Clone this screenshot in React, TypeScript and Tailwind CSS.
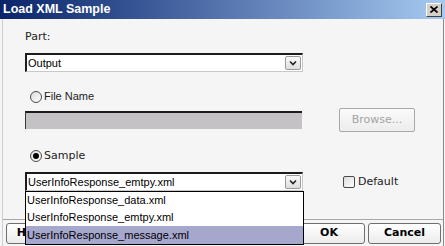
import React from 'react';

const Chevron = () => (
    <svg width="10" height="6" viewBox="0 0 10 6" className="text-[#222]">
        <path d="M2 1.5 L5 4.5 L8 1.5" fill="none" stroke="currentColor" strokeWidth="1.6" />
    </svg>
);

const DropButton = () => (
    <div className="absolute right-[1px] top-[1px] bottom-[1px] w-[16px] rounded-[2px] border border-[#9a9a9a] bg-gradient-to-b from-[#fafafa] to-[#dedede] flex items-center justify-center">
        <Chevron />
    </div>
);

const Radio = ({ checked }: { checked?: boolean }) => (
    <span className="w-[12px] h-[12px] rounded-full border border-[#4a4a4a] bg-gradient-to-br from-[#dcdcdc] to-white flex items-center justify-center">
        {checked && <span className="w-[6px] h-[6px] rounded-full bg-black" />}
    </span>
);

const Field = ({ children, className = '' }: any) => (
    <div className={`relative h-[19px] flex items-center bg-white border-t-2 border-l-2 border-t-[#1c1c1c] border-l-[#1c1c1c] border-b border-r border-b-[#c8c8c8] border-r-[#c8c8c8] ${className}`}>
        {children}
    </div>
);

const DialogButton = ({ label, className = '' }: any) => (
    <div className={`h-[21px] rounded-[3px] border border-[#6e6e6e] bg-gradient-to-b from-white to-[#ececec] flex items-center justify-center font-['DejaVu_Sans'] font-bold text-[11px] text-black ${className}`}>
        {label}
    </div>
);

export default function App() {
    const items = ['UserInfoResponse_data.xml', 'UserInfoResponse_emtpy.xml', 'UserInfoResponse_message.xml'];
    return (
        <div className="w-[445px] h-[246px] overflow-hidden bg-[#f5f5f5] flex flex-col font-['DejaVu_Sans'] text-black select-none">
            {/* Title bar */}
            <div className="h-[19px] shrink-0 bg-gradient-to-r from-[#0a246a] via-[#5674ae] to-[#a6caf0] flex items-center justify-between pl-[3px] pr-[3px]">
                <span className="text-white font-['Liberation_Sans'] font-bold text-[12.5px] leading-none">Load XML Sample</span>
                <div className="w-[16px] h-[14px] bg-[#d4d0c8] border border-t-white border-l-white border-b-[#404040] border-r-[#404040] flex items-center justify-center">
                    <svg width="8" height="7" viewBox="0 0 8 7">
                        <path d="M0.5 0.5 L7.5 6.5 M7.5 0.5 L0.5 6.5" stroke="black" strokeWidth="1.7" />
                    </svg>
                </div>
            </div>

            {/* Body */}
            <div className="flex-1 ml-[2px] mr-[1px] border-l border-r border-l-[#cfcfcf] border-r-[#8a8a8a] pl-[22px] flex flex-col">
                <p className="mt-[11px] text-[11px] leading-[13px] text-[#222]">Part:</p>

                <Field className="mt-[10px] w-[278px]">
                    <span className="pl-[1px] font-['Liberation_Sans'] text-[11px] leading-none">Output</span>
                    <DropButton />
                </Field>

                <div className="mt-[18px] ml-[5px] h-[13px] flex items-center gap-[2px]">
                    <Radio />
                    <span className="font-['Liberation_Sans'] text-[11px] leading-none text-[#222]">File Name</span>
                </div>

                <div className="mt-[5px] h-[24px] flex items-center">
                    <div className="w-[277px] h-[18px] bg-[#c4c2c4] border-t-2 border-l border-t-[#1c1c1c] border-l-[#3a3a3a]" />
                    <div className="ml-[37px] w-[76px] h-[24px] rounded-[2px] border border-[#a8a8a8] bg-gradient-to-b from-[#fafafa] to-[#ededed] flex items-center justify-center text-[11px] text-[#a3a3a3]">
                        Browse...
                    </div>
                </div>

                <div className="mt-[17px] ml-[5px] h-[13px] flex items-center gap-[2px]">
                    <Radio checked />
                    <span className="text-[11px] leading-none text-[#222]">Sample</span>
                </div>

                <div className="mt-[10px] flex items-center">
                    <div className="relative">
                        <Field className="w-[278px]">
                            <span className="pl-[1px] font-['Liberation_Sans'] text-[11px] leading-none">UserInfoResponse_emtpy.xml</span>
                            <DropButton />
                        </Field>
                        {/* Open list */}
                        <div className="absolute left-0 top-full w-[279px] z-10 bg-white border border-black font-['Liberation_Sans'] text-[11px]">
                            {items.map((it, i) => (
                                <div
                                    key={it}
                                    className={`${i === 2 ? 'h-[18px] bg-[#a5a7cc]' : 'h-[17px]'} pl-[1px] flex items-center`}
                                >
                                    {it}
                                </div>
                            ))}
                        </div>
                    </div>
                    <div className="ml-[40px] flex items-center gap-[3px]">
                        <span className="w-[12px] h-[12px] rounded-[2px] border border-[#4a4a4a] bg-gradient-to-br from-[#dcdcdc] to-white" />
                        <span className="text-[11px] leading-none text-[#222]">Default</span>
                    </div>
                </div>

                {/* Footer */}
                <div className="mt-[28px] -ml-[22px] border-t border-t-[#a8a8a8]" />
                <div className="mt-[3px] -ml-[19px] flex items-center">
                    <DialogButton label="Help" className="w-[50px]" />
                    <div className="flex-1" />
                    <DialogButton label="OK" className="w-[72px]" />
                    <DialogButton label="Cancel" className="ml-[3px] mr-[2px] w-[73px]" />
                </div>
            </div>
        </div>
    );
}
